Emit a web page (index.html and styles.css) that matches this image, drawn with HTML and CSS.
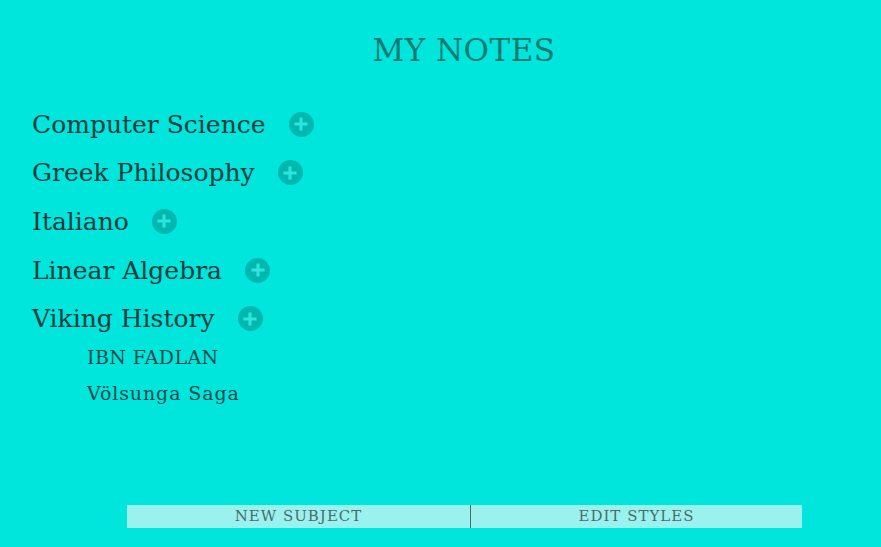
FILE: index.html
```html
<!DOCTYPE html>
<html>
<head>
<meta charset="utf-8">
<link rel="stylesheet" href="styles.css">
</head>
<body>
<div class="page">
  <h1 class="title">MY NOTES</h1>
  <ul class="subjects">
    <li class="subject"><span class="name">Computer Science</span><span class="add"></span></li>
    <li class="subject"><span class="name">Greek Philosophy</span><span class="add"></span></li>
    <li class="subject"><span class="name">Italiano</span><span class="add"></span></li>
    <li class="subject"><span class="name">Linear Algebra</span><span class="add"></span></li>
    <li class="subject"><span class="name">Viking History</span><span class="add"></span></li>
  </ul>
  <ul class="notes">
    <li class="note">IBN FADLAN</li>
    <li class="note saga">Völsunga Saga</li>
  </ul>
  <div class="spacer"></div>
  <div class="buttons">
    <div class="btn first">NEW SUBJECT</div>
    <div class="btn">EDIT STYLES</div>
  </div>
</div>
</body>
</html>
```
FILE: styles.css
```css
html, body {
  margin: 0;
  padding: 0;
  background: #00e5dc;
}
body {
  font-family: "DejaVu Serif", serif;
  width: 881px;
  height: 547px;
  overflow: hidden;
}
.page {
  display: flex;
  flex-direction: column;
  height: 547px;
}
.title {
  margin: 30px 0 0 0;
  padding-left: 47px;
  text-align: center;
  font-weight: normal;
  font-size: 31px;
  line-height: 40px;
  letter-spacing: 0.5px;
  color: #0d7a72;
}
.subjects {
  list-style: none;
  margin: 30px 0 0 32px;
  padding: 0;
}
.subject {
  display: flex;
  align-items: center;
  height: 48.6px;
  font-size: 25px;
  color: #0b3b3b;
}
.add {
  position: relative;
  width: 25px;
  height: 25px;
  border-radius: 50%;
  background: #00b8b0;
  margin-left: 23px;
}
.add::before, .add::after {
  content: "";
  position: absolute;
  background: #2ee5dc;
  left: 50%;
  top: 50%;
  transform: translate(-50%, -50%);
}
.add::before { width: 13px; height: 3px; }
.add::after { width: 3px; height: 13px; }
.notes {
  list-style: none;
  margin: -4px 0 0 87px;
  padding: 0;
}
.note {
  font-size: 19px;
  line-height: 36px;
  color: #0d4a4a;
  letter-spacing: 0.4px;
}
.saga {
  letter-spacing: 0.9px;
}
.spacer { flex: 1; }
.buttons {
  display: flex;
  margin: 0 79px 19px 127px;
  height: 23px;
  background: #9af2ee;
}
.btn {
  flex: 1;
  text-align: center;
  font-size: 15px;
  line-height: 23px;
  color: #4d6b6b;
  letter-spacing: 1px;
}
.btn.first {
  flex: 0 0 343px;
}
.btn + .btn {
  border-left: 1px solid #4d6b6b;
}
```
